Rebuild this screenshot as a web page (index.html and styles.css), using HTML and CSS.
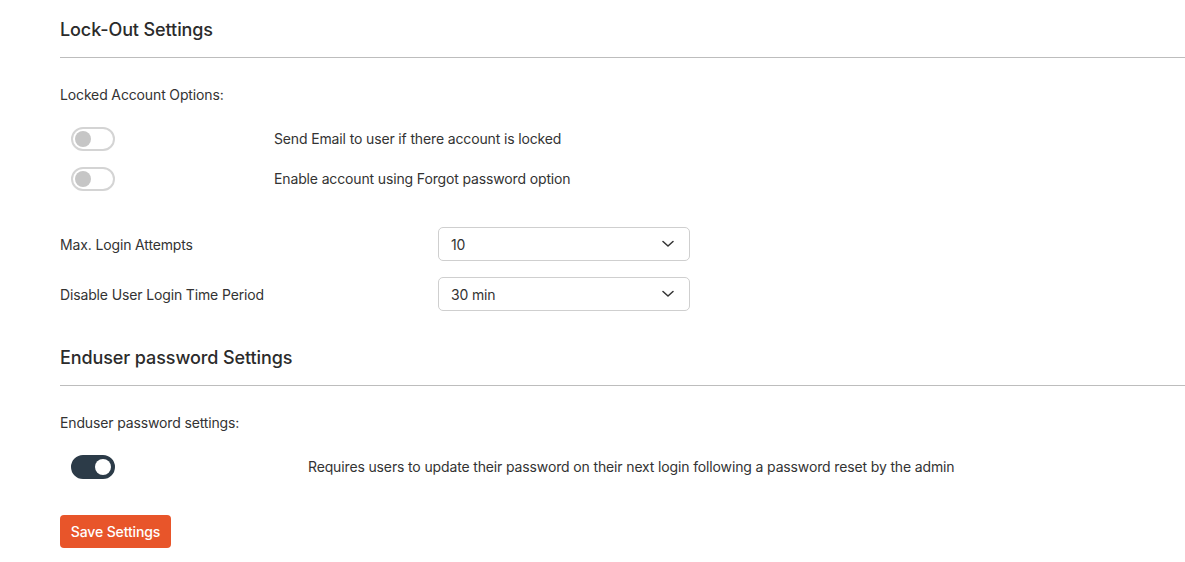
FILE: index.html
```html
<!DOCTYPE html>
<html>
<head>
<meta charset="utf-8">
<link rel="stylesheet" href="styles.css">
</head>
<body>
<div class="page">
  <h2 class="section-title">Lock-Out Settings</h2>
  <div class="subhead">Locked Account Options:</div>
  <div class="toggle-list">
    <div class="toggle-row">
      <span class="switch"><span class="knob"></span></span>
      <span class="toggle-text">Send Email to user if there account is locked</span>
    </div>
    <div class="toggle-row">
      <span class="switch"><span class="knob"></span></span>
      <span class="toggle-text">Enable account using Forgot password option</span>
    </div>
  </div>
  <div class="field-list">
    <div class="field-row">
      <label class="field-label">Max. Login Attempts</label>
      <div class="select">
        <span>10</span>
        <svg width="12" height="8" viewBox="0 0 12 8"><polyline points="1,1.5 6,6 11,1.5" fill="none" stroke="#333" stroke-width="1.5" stroke-linecap="round" stroke-linejoin="round"/></svg>
      </div>
    </div>
    <div class="field-row">
      <label class="field-label">Disable User Login Time Period</label>
      <div class="select">
        <span>30 min</span>
        <svg width="12" height="8" viewBox="0 0 12 8"><polyline points="1,1.5 6,6 11,1.5" fill="none" stroke="#333" stroke-width="1.5" stroke-linecap="round" stroke-linejoin="round"/></svg>
      </div>
    </div>
  </div>
  <h2 class="section-title second">Enduser password Settings</h2>
  <div class="subhead">Enduser password settings:</div>
  <div class="toggle-list">
    <div class="toggle-row wide">
      <span class="switch on"><span class="knob"></span></span>
      <span class="toggle-text">Requires users to update their password on their next login following a password reset by the admin</span>
    </div>
  </div>
  <button class="save-btn">Save Settings</button>
</div>
</body>
</html>
```
FILE: styles.css
```css
* { box-sizing: border-box; }
html, body { margin: 0; padding: 0; background: #fff; }
body {
  font-family: "Inter", "Liberation Sans", sans-serif;
  font-size: 14px;
  letter-spacing: -0.14px;
  color: #333;
}
.page {
  padding-left: 60px;
  display: flex;
  flex-direction: column;
  align-items: stretch;
}
.section-title {
  margin: 19px 0 0 0;
  font-size: 18px;
  line-height: 22px;
  font-weight: 500;
  letter-spacing: -0.1px;
  color: #2b2b2b;
  padding-bottom: 16px;
  border-bottom: 1px solid #bdbdbd;
}
.section-title.second { margin-top: 36px; }
.subhead {
  margin-top: 27px;
  line-height: 20px;
}
.toggle-list {
  margin-top: 22px;
  display: flex;
  flex-direction: column;
  gap: 16px;
}
.toggle-row {
  display: grid;
  grid-template-columns: 214px 1fr;
  align-items: center;
  height: 24px;
}
.toggle-row.wide { grid-template-columns: 248px 1fr; }
.switch {
  margin-left: 11px;
  width: 44px;
  height: 24px;
  border: 2px solid #d4d4d4;
  border-radius: 12px;
  background: #fff;
  display: flex;
  align-items: center;
  padding: 0 2px;
}
.knob {
  width: 16px;
  height: 16px;
  border-radius: 50%;
  background: #c6c6c6;
}
.switch.on {
  background: #2c3b48;
  border-color: #2c3b48;
  justify-content: flex-end;
}
.switch.on .knob { background: #fff; }
.toggle-text { line-height: 20px; }
.field-list {
  margin-top: 36px;
  display: flex;
  flex-direction: column;
  gap: 16px;
}
.field-row {
  display: grid;
  grid-template-columns: 378px 252px;
  align-items: center;
}
.select {
  height: 34px;
  border: 1px solid #cfcfcf;
  border-radius: 5px;
  display: flex;
  align-items: center;
  justify-content: space-between;
  padding: 0 15px 0 12px;
}
.save-btn {
  align-self: flex-start;
  margin-top: 36px;
  width: 111px;
  height: 33px;
  border: none;
  border-radius: 4px;
  background: #e8552a;
  color: #fff;
  font-family: inherit;
  font-size: 14px;
  letter-spacing: -0.14px;
  font-weight: 500;
  padding: 0;
}
```
